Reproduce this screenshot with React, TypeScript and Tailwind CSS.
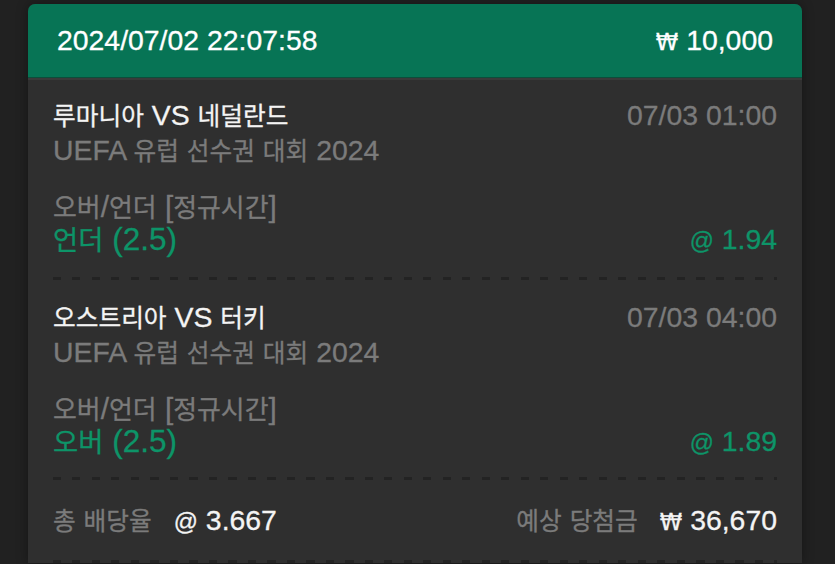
import React from "react";

function T({ text }: { text: string }) {
  const parts = text.split(/([\uAC00-\uD7A3]+|@|₩)/);
  return (
    <>
      {parts.map((p, i) => {
        if (p === "") return null;
        if (p === "@") {
          return (
            <span key={i} className="inline-block leading-none text-[0.84em]">
              @
            </span>
          );
        }
        if (p === "₩") {
          return (
            <span key={i} className="inline-block leading-none text-[0.8em] font-['DejaVu_Sans',sans-serif]">
              ₩
            </span>
          );
        }
        if (/[\uAC00-\uD7A3]/.test(p)) {
          return (
            <span key={i} className="inline-block leading-none whitespace-pre text-[0.87em] font-['Noto_Sans_CJK_KR',sans-serif]">
              {p}
            </span>
          );
        }
        return (
          <span key={i} className="inline-block leading-none whitespace-pre">
            {p}
          </span>
        );
      })}
    </>
  );
}

function Dash() {
  return (
    <div className="h-[3px] w-full bg-[repeating-linear-gradient(90deg,#232323_0px,#232323_8px,transparent_8px,transparent_19.5px)]" />
  );
}

type Bet = {
  title: string;
  time: string;
  league: string;
  market: string;
  pick: string;
  odds: string;
};

const bets: Bet[] = [
  {
    title: "루마니아 VS 네덜란드",
    time: "07/03 01:00",
    league: "UEFA 유럽 선수권 대회 2024",
    market: "오버/언더 [정규시간]",
    pick: "언더 (2.5)",
    odds: "@ 1.94",
  },
  {
    title: "오스트리아 VS 터키",
    time: "07/03 04:00",
    league: "UEFA 유럽 선수권 대회 2024",
    market: "오버/언더 [정규시간]",
    pick: "오버 (2.5)",
    odds: "@ 1.89",
  },
];

export default function App() {
  return (
    <div className="w-[835px] h-[564px] overflow-hidden bg-[#212121] pt-[4px] font-['Liberation_Sans','Noto_Sans_CJK_KR',sans-serif] text-[28.4px] leading-none [-webkit-text-stroke:0.3px_currentColor]">
      <div className="ml-[28px] w-[774px] rounded-t-[7px] overflow-hidden bg-[#2f2f2f] shadow-[0_0_12px_rgba(0,0,0,0.35)]">
        <div className="h-[73px] bg-[#077455] px-[29px] flex items-center justify-between text-white">
          <span>2024/07/02 22:07:58</span>
          <span>
            <T text="₩ 10,000" />
          </span>
        </div>
        <div className="h-px bg-[#0d4d3b]" />
        <div className="h-[2px] bg-[#3a3a3a]" />
        <div className="px-[25px]">
          {bets.map((b, i) => (
            <div key={i} className={i === 0 ? "pt-[17px]" : "pt-[19px]"}>
              <div className="h-[36px] flex justify-between items-center">
                <span className="text-[#f4f4f4]">
                  <T text={b.title} />
                </span>
                <span className="text-[#7b7b7b]">{b.time}</span>
              </div>
              <div className="h-[35px] flex items-center text-[#7b7b7b]">
                <span>
                  <T text={b.league} />
                </span>
              </div>
              <div className="mt-[23px] h-[32px] flex items-center text-[#7b7b7b] text-[29.8px]">
                <span>
                  <T text={b.market} />
                </span>
              </div>
              <div className="h-[33px] flex justify-between items-center text-[#0d9468]">
                <span className="text-[31.5px]">
                  <T text={b.pick} />
                </span>
                <span>
                  <T text={b.odds} />
                </span>
              </div>
              <div className={i === 0 ? "mt-[21px]" : "mt-[19px]"}>
                <Dash />
              </div>
            </div>
          ))}
          <div className="mt-[22px] h-[36px] flex justify-between items-center">
            <div className="flex items-center gap-[22px]">
              <span className="text-[#7b7b7b]">
                <T text="총 배당율" />
              </span>
              <span className="text-[#f4f4f4]">
                <T text="@ 3.667" />
              </span>
            </div>
            <div className="flex items-center gap-[22px]">
              <span className="text-[#7b7b7b]">
                <T text="예상 당첨금" />
              </span>
              <span className="text-[#f4f4f4]">
                <T text="₩ 36,670" />
              </span>
            </div>
          </div>
          <div className="mt-[22px]">
            <Dash />
          </div>
        </div>
      </div>
    </div>
  );
}
